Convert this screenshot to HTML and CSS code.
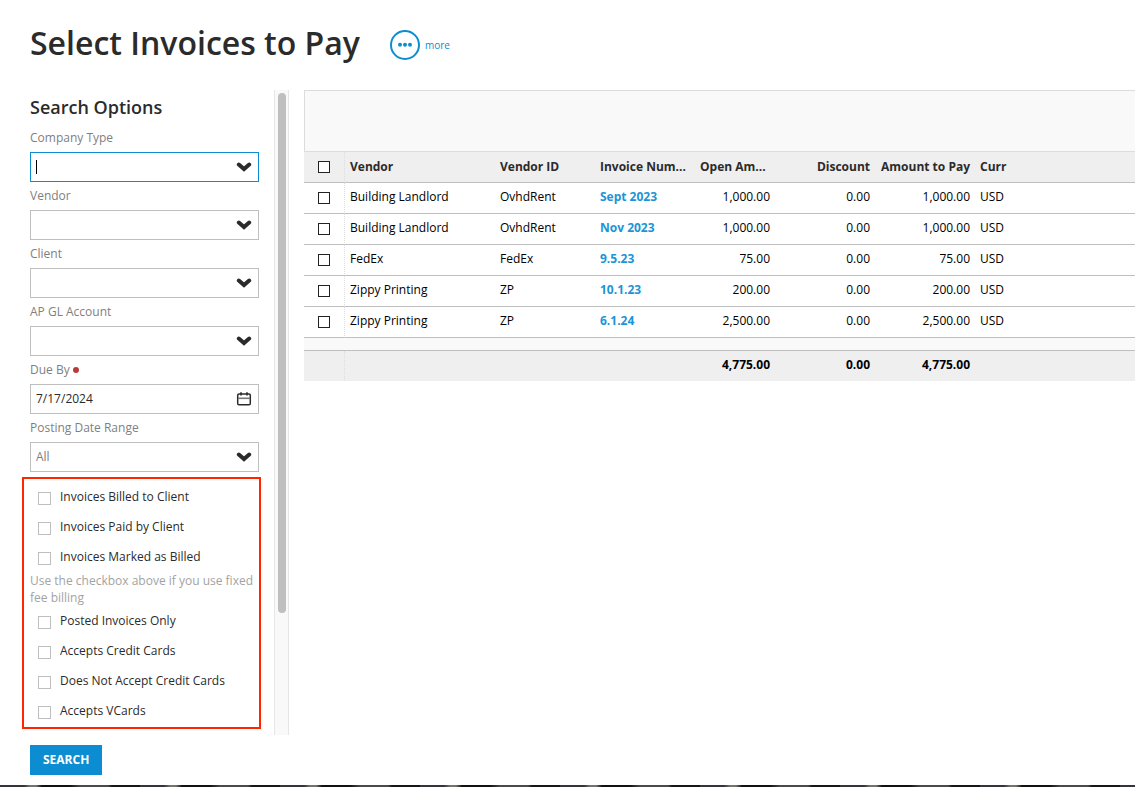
FILE: index.html
```html
<!DOCTYPE html>
<html lang="en">
<head>
  <meta charset="UTF-8" />
  <meta name="viewport" content="width=device-width, initial-scale=1.0" />
  <title>Select Invoices to Pay</title>
  <link rel="stylesheet" href="styles.css">
</head>
<body>
  <svg class="sprite" aria-hidden="true">
    <symbol id="chevron" viewBox="0 0 16 10">
      <path d="M2.8 2.5 L8 7 L13.2 2.5" fill="none" stroke="#2b2b2b" stroke-width="4" stroke-linecap="round" />
    </symbol>
  </svg>

  <header class="page-header">
    <h1>Select Invoices to Pay</h1>
    <button type="button" class="more">
      <svg width="30" height="30" viewBox="0 0 30 30" aria-hidden="true">
        <circle cx="15" cy="15" r="14" fill="none" stroke="#0d8dd1" stroke-width="2" />
        <circle cx="10" cy="14.7" r="2" fill="#0d8dd1" />
        <circle cx="15" cy="14.7" r="2" fill="#0d8dd1" />
        <circle cx="20" cy="14.7" r="2" fill="#0d8dd1" />
      </svg>
      more
    </button>
  </header>

  <main>
    <form class="search" id="searchForm">
      <h2>Search Options</h2>

      <label for="companyType">Company Type</label>
      <div class="field focused">
        <select id="companyType"><option></option></select>
        <svg class="icon" width="16" height="10"><use href="#chevron" /></svg>
      </div>

      <label for="vendor">Vendor</label>
      <div class="field">
        <select id="vendor"><option></option></select>
        <svg class="icon" width="16" height="10"><use href="#chevron" /></svg>
      </div>

      <label for="client">Client</label>
      <div class="field">
        <select id="client"><option></option></select>
        <svg class="icon" width="16" height="10"><use href="#chevron" /></svg>
      </div>

      <label for="glAccount">AP GL Account</label>
      <div class="field">
        <select id="glAccount"><option></option></select>
        <svg class="icon" width="16" height="10"><use href="#chevron" /></svg>
      </div>

      <label for="dueBy">Due By <span class="required"></span></label>
      <div class="field">
        <input type="text" id="dueBy" value="7/17/2024">
        <svg class="icon" width="16" height="16" viewBox="0 0 16 16" aria-hidden="true">
          <rect x="1.7" y="3" width="12.6" height="10.8" rx="1.3" fill="none" stroke="#2b2b2b" stroke-width="1.5" />
          <path d="M2 7.3 H14" stroke="#777" stroke-width="1.6" />
          <path d="M5 1.2 V4.6 M11 1.2 V4.6" stroke="#2b2b2b" stroke-width="1.6" />
        </svg>
      </div>

      <label for="dateRange">Posting Date Range</label>
      <div class="field">
        <select id="dateRange" class="muted"><option>All</option></select>
        <svg class="icon" width="16" height="10"><use href="#chevron" /></svg>
      </div>

      <fieldset class="filters" aria-label="Invoice filters">
        <label class="check"><input type="checkbox"> Invoices Billed to Client</label>
        <label class="check"><input type="checkbox"> Invoices Paid by Client</label>
        <label class="check"><input type="checkbox"> Invoices Marked as Billed</label>
        <p>Use the checkbox above if you use fixed fee billing</p>
        <label class="check"><input type="checkbox"> Posted Invoices Only</label>
        <label class="check"><input type="checkbox"> Accepts Credit Cards</label>
        <label class="check"><input type="checkbox"> Does Not Accept Credit Cards</label>
        <label class="check"><input type="checkbox"> Accepts VCards</label>
      </fieldset>
    </form>

    <div class="scrollbar"><div class="thumb"></div></div>

    <section class="results">
      <div class="toolbar"></div>
      <table>
        <colgroup>
          <col class="col-check"><col class="col-vendor"><col class="col-std"><col class="col-std">
          <col class="col-open"><col class="col-std"><col class="col-std"><col>
        </colgroup>
        <thead>
          <tr>
            <th class="pick"><input type="checkbox" aria-label="Select all"></th>
            <th>Vendor</th>
            <th>Vendor ID</th>
            <th>Invoice Num...</th>
            <th>Open Am...</th>
            <th class="num">Discount</th>
            <th class="num">Amount to Pay</th>
            <th>Curr</th>
          </tr>
        </thead>
        <tbody>
          <tr>
            <td class="pick"><input type="checkbox" aria-label="Select Sept 2023"></td>
            <td>Building Landlord</td>
            <td>OvhdRent</td>
            <td><a href="#">Sept 2023</a></td>
            <td class="num">1,000.00</td>
            <td class="num">0.00</td>
            <td class="num">1,000.00</td>
            <td>USD</td>
          </tr>
          <tr>
            <td class="pick"><input type="checkbox" aria-label="Select Nov 2023"></td>
            <td>Building Landlord</td>
            <td>OvhdRent</td>
            <td><a href="#">Nov 2023</a></td>
            <td class="num">1,000.00</td>
            <td class="num">0.00</td>
            <td class="num">1,000.00</td>
            <td>USD</td>
          </tr>
          <tr>
            <td class="pick"><input type="checkbox" aria-label="Select 9.5.23"></td>
            <td>FedEx</td>
            <td>FedEx</td>
            <td><a href="#">9.5.23</a></td>
            <td class="num">75.00</td>
            <td class="num">0.00</td>
            <td class="num">75.00</td>
            <td>USD</td>
          </tr>
          <tr>
            <td class="pick"><input type="checkbox" aria-label="Select 10.1.23"></td>
            <td>Zippy Printing</td>
            <td>ZP</td>
            <td><a href="#">10.1.23</a></td>
            <td class="num">200.00</td>
            <td class="num">0.00</td>
            <td class="num">200.00</td>
            <td>USD</td>
          </tr>
          <tr>
            <td class="pick"><input type="checkbox" aria-label="Select 6.1.24"></td>
            <td>Zippy Printing</td>
            <td>ZP</td>
            <td><a href="#">6.1.24</a></td>
            <td class="num">2,500.00</td>
            <td class="num">0.00</td>
            <td class="num">2,500.00</td>
            <td>USD</td>
          </tr>
        </tbody>
        <tfoot>
          <tr class="spacer"><td colspan="8"></td></tr>
          <tr class="totals">
            <td class="pick"></td>
            <td></td>
            <td></td>
            <td></td>
            <td class="num">4,775.00</td>
            <td class="num">0.00</td>
            <td class="num">4,775.00</td>
            <td></td>
          </tr>
        </tfoot>
      </table>
    </section>
  </main>

  <footer>
    <button type="submit" form="searchForm" class="search-btn">SEARCH</button>
  </footer>
  <div class="backdrop"></div>
</body>
</html>
```
FILE: styles.css
```css
* {
  box-sizing: border-box;
}

body {
  margin: 0;
  min-height: 100vh;
  display: flex;
  flex-direction: column;
  font-family: "Open Sans", "Noto Sans", sans-serif;
  font-size: 12px;
  color: #2b2b2b;
  background: #fff;
}

input, select, button {
  font: inherit;
  color: inherit;
}

.sprite {
  display: none;
}

.page-header {
  display: flex;
  align-items: center;
  gap: 30px;
  height: 90px;
  padding-left: 30px;
}

h1 {
  margin: 0;
  padding-bottom: 4px;
  font-size: 32px;
  font-weight: 600;
  line-height: 44px;
}

.more {
  display: flex;
  align-items: center;
  gap: 5px;
  padding: 0;
  border: none;
  background: none;
  font-size: 10px;
  color: #0d8dd1;
  cursor: pointer;
}

main {
  flex: 1;
  display: flex;
}

/* search panel */

.search {
  flex: none;
  width: 259px;
  padding-left: 30px;
}

h2 {
  margin: 0;
  font-size: 18px;
  font-weight: 600;
  line-height: 34px;
}

.search label {
  display: block;
  line-height: 28px;
  color: #7f7f7f;
}

.required {
  display: inline-block;
  width: 6px;
  height: 6px;
  border-radius: 50%;
  background: #b93a3a;
  vertical-align: 1px;
}

.field {
  position: relative;
  display: flex;
  align-items: center;
  height: 30px;
  border: 1px solid #bfbfbf;
}

.field select,
.field input {
  appearance: none;
  width: 100%;
  height: 100%;
  padding: 0 30px 2px 5px;
  border: none;
  outline: none;
  background: none;
}

.field .muted {
  color: #7f7f7f;
}

.field .icon {
  position: absolute;
  right: 6px;
  pointer-events: none;
}

.focused {
  border-color: #0d8dd1;
}

.focused::before {
  content: "";
  position: absolute;
  left: 5px;
  width: 1px;
  height: 14px;
  background: #000;
}

.filters {
  min-width: 0;
  margin: 5px -2px 0 -8px;
  padding: 3px 6px 1px;
  border: 2px solid #ff2600;
}

.search .check {
  display: flex;
  align-items: center;
  gap: 9px;
  padding-left: 8px;
  line-height: 30px;
  color: #2b2b2b;
}

.check input {
  appearance: none;
  width: 13px;
  height: 13px;
  margin: 3px 0 0;
  border: 1px solid #bfbfbf;
  background: #fff;
}

.filters p {
  margin: 0;
  line-height: 17px;
  color: #a3a3a3;
}

.scrollbar {
  flex: none;
  width: 15px;
  margin: 0 15px;
  padding: 3px 0 0 3px;
  border: solid #e6e6e6;
  border-width: 0 1px;
  background: #f9f9f9;
}

.thumb {
  width: 8px;
  height: 81%;
  border-radius: 4px;
  background: #bfbfbf;
}

/* invoice grid */

.results {
  flex: 1;
  min-width: 0;
}

.toolbar {
  height: 62px;
  border: 1px solid #dcdcdc;
  border-right: none;
  background: #f9f9f9;
}

table {
  width: 100%;
  table-layout: fixed;
  border-collapse: separate;
  border-spacing: 0;
}

.col-check {
  width: 41px;
}

.col-vendor {
  width: 150px;
}

.col-std {
  width: 100px;
}

.col-open {
  width: 80px;
}

th, td {
  height: 31px;
  padding: 0 5px 2px;
  border-bottom: 1px solid #bfbfbf;
  text-align: left;
  white-space: nowrap;
}

td {
  padding-bottom: 4px;
  color: #000;
}

th {
  background: #efefef;
  font-weight: 700;
}

.num {
  text-align: right;
}

td.pick, th.pick {
  padding: 0 0 0 14px;
  border-right: 1px dotted #dcdcdc;
}

.pick input {
  appearance: none;
  display: block;
  width: 12px;
  height: 12px;
  margin: 0;
  border: 1px solid #222;
  background: #fff;
}

td a {
  color: #1c94d6;
  font-weight: 700;
  text-decoration: none;
}

.spacer td {
  height: 13px;
  padding: 0;
  background: #f9f9f9;
}

.totals td {
  height: 30px;
  border-bottom: none;
  background: #efefef;
  font-weight: 700;
}

footer {
  padding: 10px 30px;
}

.search-btn {
  display: block;
  height: 30px;
  padding: 0 13px 2px;
  border: none;
  background: #0d8dd1;
  color: #fff;
  font-weight: 700;
  cursor: pointer;
}

.backdrop {
  height: 2px;
  background: repeating-linear-gradient(90deg, #35343a 0 24px, #77736d 30px 36px, #111 42px 70px, #4b494c 80px 108px, #161616 112px 140px);
}
```
